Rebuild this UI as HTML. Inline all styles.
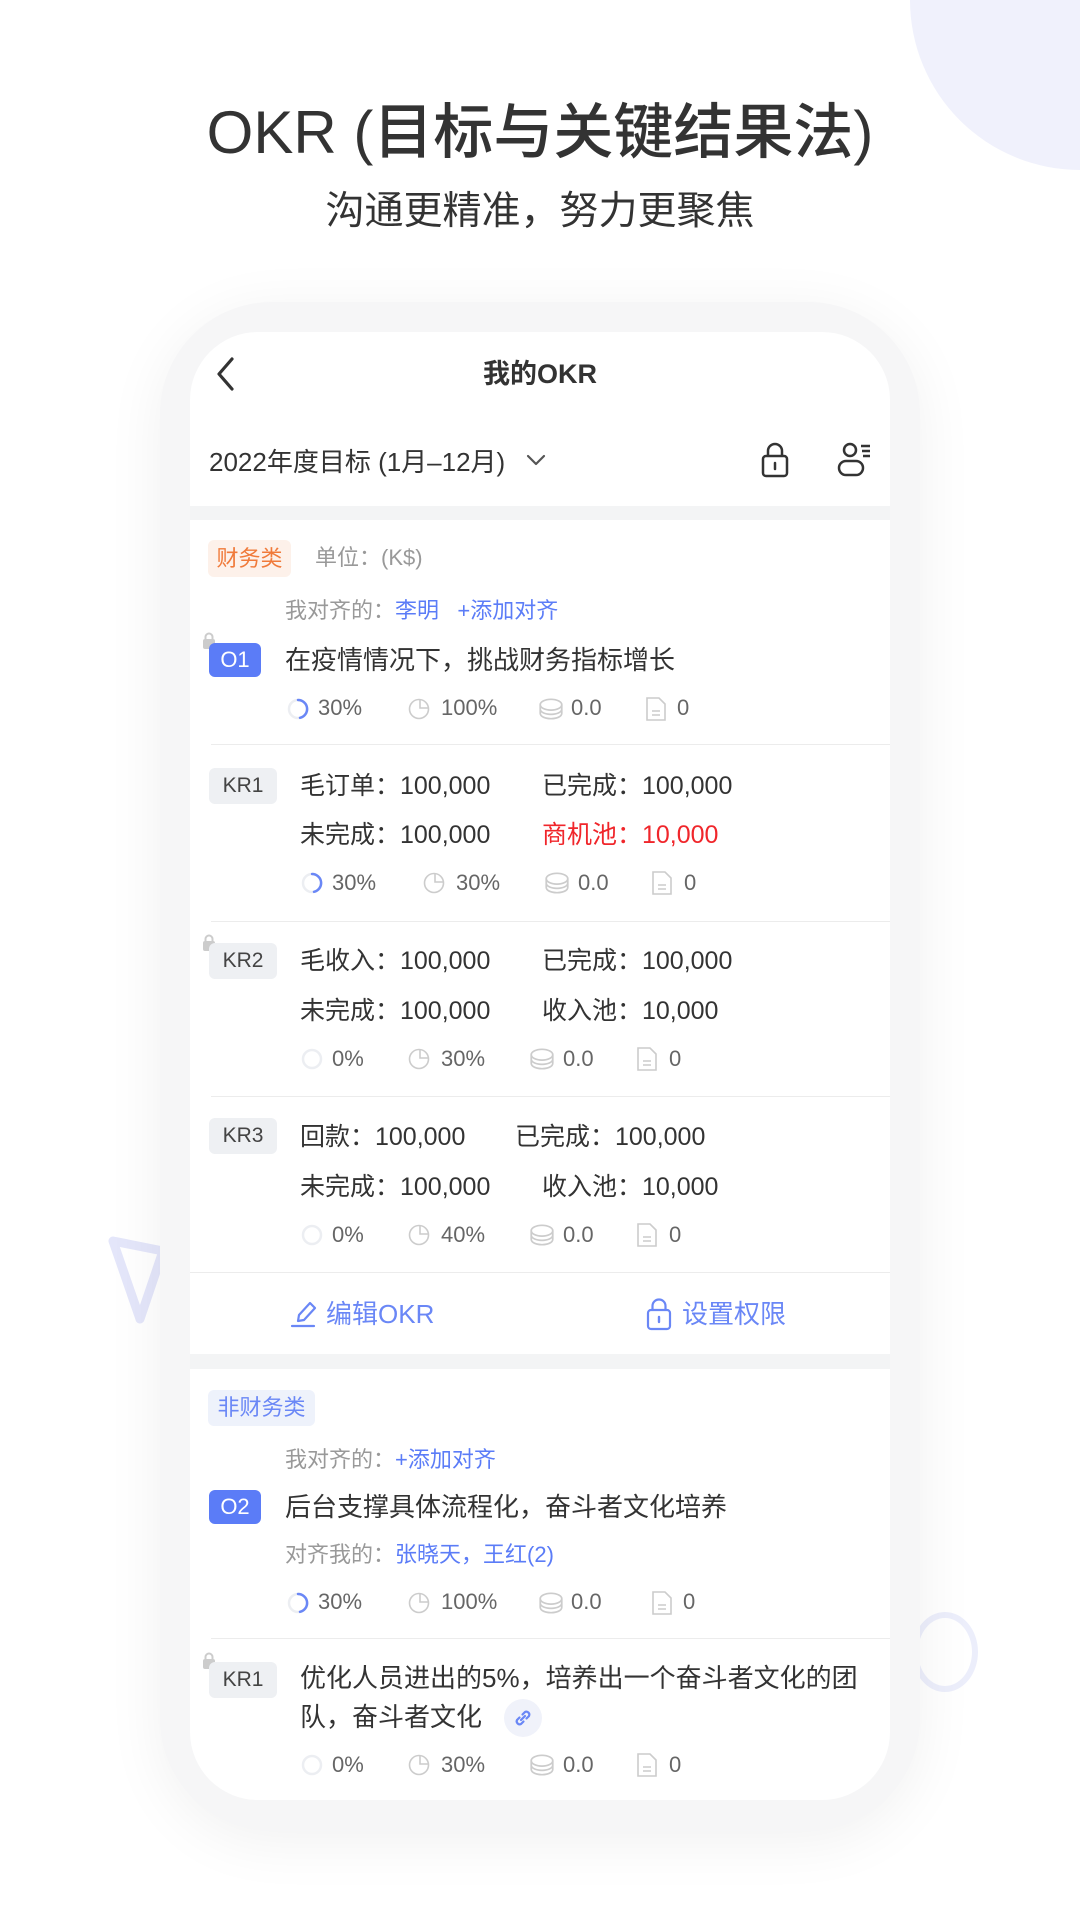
<!DOCTYPE html>
<html><head><meta charset="utf-8"><style>
*{margin:0;padding:0;box-sizing:border-box}
body{width:1080px;height:1920px;position:relative;overflow:hidden;background:#fff;font-family:"Liberation Sans","Noto Sans CJK SC",sans-serif;color:#333}
.a{position:absolute;white-space:nowrap;line-height:40px;height:40px}
.g{color:#999}.b{color:#5b7cf7}
.s{font-size:22px;color:#666}
.m{font-size:25px;color:#333}
svg{position:absolute}
.badge{position:absolute;border-radius:6px;font-size:21px;text-align:center}
.kr{background:#eef0f3;color:#444;width:68px;height:36px;line-height:36px}
.o{background:#5b7cf7;color:#fff;width:52px;height:34px;line-height:34px;font-size:22px}
.div{position:absolute;left:211px;right:190px;height:1px;background:#ececec}
</style></head><body>
<div style="position:absolute;left:910px;top:-170px;width:340px;height:340px;border-radius:50%;background:#f0f1fc"></div>
<div class="a" style="left:0;width:1080px;text-align:center;top:100px;height:66px;line-height:66px;font-size:60px;color:#333;font-weight:500">OKR (目标与关键结果法)</div>
<div class="a" style="left:0;width:1080px;text-align:center;top:190px;height:44px;line-height:44px;font-size:39px;color:#333">沟通更精准，努力更聚焦</div>
<svg style="left:108px;top:1235px" width="62" height="90" viewBox="0 0 62 90"><path d="M5 6 L55 16 L32 84 Z" fill="none" stroke="#e4e6fa" stroke-width="9" stroke-linejoin="round"/></svg>
<div style="position:absolute;left:912px;top:1612px;width:66px;height:80px;border-radius:50%;border:6px solid #eceefb"></div>
<!-- phone -->
<div style="position:absolute;left:160px;top:302px;width:760px;height:1529px;border-radius:112px;background:#f6f6f7;box-shadow:0 10px 60px rgba(0,0,0,0.06)"></div>
<div style="position:absolute;left:190px;top:332px;width:700px;height:1468px;border-radius:68px;background:#f3f4f5;overflow:hidden">
<div style="position:absolute;left:0;top:0;width:700px;height:174px;background:#fff"></div>
<div style="position:absolute;left:0;top:188px;width:700px;height:834px;background:#fff"></div>
<div style="position:absolute;left:0;top:1037px;width:700px;height:440px;background:#fff"></div>
</div>
<!-- header -->
<svg style="left:214px;top:356px" width="24" height="36" viewBox="0 0 24 36"><path d="M18 3 L5 18 L18 33" fill="none" stroke="#333" stroke-width="3.2" stroke-linecap="round" stroke-linejoin="round"/></svg>
<div class="a" style="left:440px;width:200px;text-align:center;top:354px;font-size:27px;font-weight:bold;color:#333">我的OKR</div>
<div class="a" style="left:209px;top:442px;font-size:26px;color:#333">2022年度目标 (1月–12月)</div>
<svg style="left:525px;top:452px" width="22" height="16" viewBox="0 0 22 16"><path d="M3 4 L11 12 L19 4" fill="none" stroke="#555" stroke-width="2.2" stroke-linecap="round" stroke-linejoin="round"/></svg>
<svg style="left:760px;top:441px" width="30" height="38" viewBox="0 0 30 38"><rect x="3" y="15" width="24" height="20" rx="3" fill="none" stroke="#333" stroke-width="2.5"/><path d="M8 15 V10 a7 7 0 0 1 14 0 V15" fill="none" stroke="#333" stroke-width="2.5"/><path d="M15 22 v6" stroke="#333" stroke-width="2.5" stroke-linecap="round"/></svg>
<svg style="left:836px;top:441px" width="38" height="38" viewBox="0 0 38 38"><circle cx="14" cy="9" r="6" fill="none" stroke="#333" stroke-width="2.5"/><rect x="3" y="20" width="24" height="14" rx="7" fill="none" stroke="#333" stroke-width="2.5"/><path d="M25 5h9M26 10h8M27 15h7" stroke="#333" stroke-width="2.5"/></svg>

<!-- card 1 -->
<div class="badge" style="left:208px;top:540px;width:83px;height:37px;line-height:37px;background:#fdf1ea;color:#f07a3a;font-size:22px">财务类</div>
<div class="a s g" style="left:315px;top:538px;color:#999">单位：(K$)</div>
<div class="a s" style="left:285px;top:591px;color:#999">我对齐的：<span class="b">李明</span>&nbsp;&nbsp;&nbsp;<span class="b">+添加对齐</span></div>
<svg style="left:202px;top:632px" width="14" height="18" viewBox="0 0 14 18"><rect x="1" y="7" width="12" height="10" rx="2" fill="#ccc"/><path d="M3.5 7V5a3.5 3.5 0 0 1 7 0v2" fill="none" stroke="#ccc" stroke-width="2"/></svg>
<div class="badge o" style="left:209px;top:643px">O1</div>
<div class="a" style="left:285px;top:640px;font-size:26px;color:#333">在疫情情况下，挑战财务指标增长</div>

<svg style="left:286px;top:697px" width="24" height="24" viewBox="0 0 24 24"><circle cx="12" cy="12" r="9" fill="none" stroke="#eceef2" stroke-width="2.5"/><path d="M12 3A9 9 0 0 1 14 20.8" fill="none" stroke="#6a87f6" stroke-width="2.5" stroke-linecap="round"/></svg>
<div class="a s" style="left:318px;top:688px">30%</div>
<svg style="left:407px;top:697px" width="24" height="24" viewBox="0 0 24 24"><circle cx="12" cy="12" r="9.5" fill="none" stroke="#ccc" stroke-width="1.6"/><path d="M13 2.5V11H21.5" fill="none" stroke="#ccc" stroke-width="1.6"/></svg>
<div class="a s" style="left:441px;top:688px">100%</div>
<svg style="left:537px;top:695px" width="28" height="28" viewBox="0 0 26 24"><ellipse cx="13" cy="8" rx="10" ry="5" fill="none" stroke="#ccc" stroke-width="1.6"/><path d="M3 8v8c0 3 4.5 5 10 5s10-2 10-5V8M3 12c0 3 4.5 5 10 5s10-2 10-5" fill="none" stroke="#ccc" stroke-width="1.6"/></svg>
<div class="a s" style="left:571px;top:688px">0.0</div>
<svg style="left:645px;top:696px" width="22" height="26" viewBox="0 0 22 26"><path d="M2 2h12l6 6v16H2Z" fill="none" stroke="#ccc" stroke-width="1.6"/><path d="M7 15h8M7 19h8" stroke="#ccc" stroke-width="1.6"/></svg>
<div class="a s" style="left:677px;top:688px">0</div>
<div class="div" style="top:744px"></div>

<!-- KR1 -->
<div class="badge kr" style="left:209px;top:768px">KR1</div>
<div class="a m" style="left:300px;top:766px">毛订单：100,000</div>
<div class="a m" style="left:542px;top:766px">已完成：100,000</div>
<div class="a m" style="left:300px;top:815px">未完成：100,000</div>
<div class="a m" style="left:542px;top:815px;color:#f0262b">商机池：10,000</div>
<svg style="left:300px;top:871px" width="24" height="24" viewBox="0 0 24 24"><circle cx="12" cy="12" r="9" fill="none" stroke="#eceef2" stroke-width="2.5"/><path d="M12 3A9 9 0 0 1 14 20.8" fill="none" stroke="#6a87f6" stroke-width="2.5" stroke-linecap="round"/></svg>
<div class="a s" style="left:332px;top:863px">30%</div>
<svg style="left:422px;top:871px" width="24" height="24" viewBox="0 0 24 24"><circle cx="12" cy="12" r="9.5" fill="none" stroke="#ccc" stroke-width="1.6"/><path d="M13 2.5V11H21.5" fill="none" stroke="#ccc" stroke-width="1.6"/></svg>
<div class="a s" style="left:456px;top:863px">30%</div>
<svg style="left:543px;top:869px" width="28" height="28" viewBox="0 0 26 24"><ellipse cx="13" cy="8" rx="10" ry="5" fill="none" stroke="#ccc" stroke-width="1.6"/><path d="M3 8v8c0 3 4.5 5 10 5s10-2 10-5V8M3 12c0 3 4.5 5 10 5s10-2 10-5" fill="none" stroke="#ccc" stroke-width="1.6"/></svg>
<div class="a s" style="left:578px;top:863px">0.0</div>
<svg style="left:651px;top:870px" width="22" height="26" viewBox="0 0 22 26"><path d="M2 2h12l6 6v16H2Z" fill="none" stroke="#ccc" stroke-width="1.6"/><path d="M7 15h8M7 19h8" stroke="#ccc" stroke-width="1.6"/></svg>
<div class="a s" style="left:684px;top:863px">0</div>
<div class="div" style="top:921px"></div>

<!-- KR2 -->
<svg style="left:202px;top:934px" width="14" height="18" viewBox="0 0 14 18"><rect x="1" y="7" width="12" height="10" rx="2" fill="#ccc"/><path d="M3.5 7V5a3.5 3.5 0 0 1 7 0v2" fill="none" stroke="#ccc" stroke-width="2"/></svg>
<div class="badge kr" style="left:209px;top:943px">KR2</div>
<div class="a m" style="left:300px;top:941px">毛收入：100,000</div>
<div class="a m" style="left:542px;top:941px">已完成：100,000</div>
<div class="a m" style="left:300px;top:991px">未完成：100,000</div>
<div class="a m" style="left:542px;top:991px">收入池：10,000</div>
<svg style="left:300px;top:1047px" width="24" height="24" viewBox="0 0 24 24"><circle cx="12" cy="12" r="9" fill="none" stroke="#eceef2" stroke-width="2.5"/></svg>
<div class="a s" style="left:332px;top:1039px">0%</div>
<svg style="left:407px;top:1047px" width="24" height="24" viewBox="0 0 24 24"><circle cx="12" cy="12" r="9.5" fill="none" stroke="#ccc" stroke-width="1.6"/><path d="M13 2.5V11H21.5" fill="none" stroke="#ccc" stroke-width="1.6"/></svg>
<div class="a s" style="left:441px;top:1039px">30%</div>
<svg style="left:528px;top:1045px" width="28" height="28" viewBox="0 0 26 24"><ellipse cx="13" cy="8" rx="10" ry="5" fill="none" stroke="#ccc" stroke-width="1.6"/><path d="M3 8v8c0 3 4.5 5 10 5s10-2 10-5V8M3 12c0 3 4.5 5 10 5s10-2 10-5" fill="none" stroke="#ccc" stroke-width="1.6"/></svg>
<div class="a s" style="left:563px;top:1039px">0.0</div>
<svg style="left:636px;top:1046px" width="22" height="26" viewBox="0 0 22 26"><path d="M2 2h12l6 6v16H2Z" fill="none" stroke="#ccc" stroke-width="1.6"/><path d="M7 15h8M7 19h8" stroke="#ccc" stroke-width="1.6"/></svg>
<div class="a s" style="left:669px;top:1039px">0</div>
<div class="div" style="top:1096px"></div>

<!-- KR3 -->
<div class="badge kr" style="left:209px;top:1118px">KR3</div>
<div class="a m" style="left:300px;top:1117px">回款：100,000</div>
<div class="a m" style="left:515px;top:1117px">已完成：100,000</div>
<div class="a m" style="left:300px;top:1167px">未完成：100,000</div>
<div class="a m" style="left:542px;top:1167px">收入池：10,000</div>
<svg style="left:300px;top:1223px" width="24" height="24" viewBox="0 0 24 24"><circle cx="12" cy="12" r="9" fill="none" stroke="#eceef2" stroke-width="2.5"/></svg>
<div class="a s" style="left:332px;top:1215px">0%</div>
<svg style="left:407px;top:1223px" width="24" height="24" viewBox="0 0 24 24"><circle cx="12" cy="12" r="9.5" fill="none" stroke="#ccc" stroke-width="1.6"/><path d="M13 2.5V11H21.5" fill="none" stroke="#ccc" stroke-width="1.6"/></svg>
<div class="a s" style="left:441px;top:1215px">40%</div>
<svg style="left:528px;top:1221px" width="28" height="28" viewBox="0 0 26 24"><ellipse cx="13" cy="8" rx="10" ry="5" fill="none" stroke="#ccc" stroke-width="1.6"/><path d="M3 8v8c0 3 4.5 5 10 5s10-2 10-5V8M3 12c0 3 4.5 5 10 5s10-2 10-5" fill="none" stroke="#ccc" stroke-width="1.6"/></svg>
<div class="a s" style="left:563px;top:1215px">0.0</div>
<svg style="left:636px;top:1222px" width="22" height="26" viewBox="0 0 22 26"><path d="M2 2h12l6 6v16H2Z" fill="none" stroke="#ccc" stroke-width="1.6"/><path d="M7 15h8M7 19h8" stroke="#ccc" stroke-width="1.6"/></svg>
<div class="a s" style="left:669px;top:1215px">0</div>
<div class="div" style="top:1272px;left:190px"></div>

<!-- actions -->
<svg style="left:290px;top:1299px" width="28" height="30" viewBox="0 0 28 30"><path d="M8 22 L9 16 L20 4 L25 9 L14 21 Z" fill="none" stroke="#6a87f6" stroke-width="2.2" stroke-linejoin="round"/><path d="M2 27h22" stroke="#6a87f6" stroke-width="2.2" stroke-linecap="round"/></svg>
<div class="a b" style="left:326px;top:1294px;font-size:26px;color:#6a87f6">编辑OKR</div>
<svg style="left:646px;top:1297px" width="26" height="34" viewBox="0 0 26 34"><rect x="2" y="13" width="22" height="19" rx="3" fill="none" stroke="#6a87f6" stroke-width="2.2"/><path d="M6.5 13V9a6.5 6.5 0 0 1 13 0v4" fill="none" stroke="#6a87f6" stroke-width="2.2"/><path d="M13 20v5" stroke="#6a87f6" stroke-width="2.4" stroke-linecap="round"/></svg>
<div class="a b" style="left:682px;top:1294px;font-size:26px;color:#6a87f6">设置权限</div>

<!-- card 2 -->
<div class="badge" style="left:208px;top:1390px;width:107px;height:36px;line-height:36px;background:#eef2fb;color:#6a87f6;font-size:22px">非财务类</div>
<div class="a s" style="left:285px;top:1440px;color:#999">我对齐的：<span class="b">+添加对齐</span></div>
<div class="badge o" style="left:209px;top:1490px">O2</div>
<div class="a" style="left:285px;top:1487px;font-size:26px;color:#333">后台支撑具体流程化，奋斗者文化培养</div>
<div class="a s" style="left:285px;top:1535px;color:#999">对齐我的：<span class="b">张晓天，王红(2)</span></div>
<svg style="left:286px;top:1591px" width="24" height="24" viewBox="0 0 24 24"><circle cx="12" cy="12" r="9" fill="none" stroke="#eceef2" stroke-width="2.5"/><path d="M12 3A9 9 0 0 1 14 20.8" fill="none" stroke="#6a87f6" stroke-width="2.5" stroke-linecap="round"/></svg>
<div class="a s" style="left:318px;top:1582px">30%</div>
<svg style="left:407px;top:1591px" width="24" height="24" viewBox="0 0 24 24"><circle cx="12" cy="12" r="9.5" fill="none" stroke="#ccc" stroke-width="1.6"/><path d="M13 2.5V11H21.5" fill="none" stroke="#ccc" stroke-width="1.6"/></svg>
<div class="a s" style="left:441px;top:1582px">100%</div>
<svg style="left:537px;top:1589px" width="28" height="28" viewBox="0 0 26 24"><ellipse cx="13" cy="8" rx="10" ry="5" fill="none" stroke="#ccc" stroke-width="1.6"/><path d="M3 8v8c0 3 4.5 5 10 5s10-2 10-5V8M3 12c0 3 4.5 5 10 5s10-2 10-5" fill="none" stroke="#ccc" stroke-width="1.6"/></svg>
<div class="a s" style="left:571px;top:1582px">0.0</div>
<svg style="left:651px;top:1590px" width="22" height="26" viewBox="0 0 22 26"><path d="M2 2h12l6 6v16H2Z" fill="none" stroke="#ccc" stroke-width="1.6"/><path d="M7 15h8M7 19h8" stroke="#ccc" stroke-width="1.6"/></svg>
<div class="a s" style="left:683px;top:1582px">0</div>
<div class="div" style="top:1638px"></div>

<svg style="left:202px;top:1652px" width="14" height="18" viewBox="0 0 14 18"><rect x="1" y="7" width="12" height="10" rx="2" fill="#ccc"/><path d="M3.5 7V5a3.5 3.5 0 0 1 7 0v2" fill="none" stroke="#ccc" stroke-width="2"/></svg>
<div class="badge kr" style="left:209px;top:1662px">KR1</div>
<div class="a m" style="left:300px;top:1658px;font-size:26px">优化人员进出的5%，培养出一个奋斗者文化的团</div>
<div class="a m" style="left:300px;top:1697px;font-size:26px">队，奋斗者文化</div>
<div style="position:absolute;left:504px;top:1699px;width:38px;height:38px;border-radius:50%;background:#f0f2fa"></div>
<svg style="left:511px;top:1706px" width="24" height="24" viewBox="0 0 24 24"><path d="M10 14l4-4M8.5 11.5l-2.5 2.5a3 3 0 0 0 4 4l2.5-2.5M15.5 12.5l2.5-2.5a3 3 0 0 0-4-4l-2.5 2.5" fill="none" stroke="#6a87f6" stroke-width="2.2" stroke-linecap="round"/></svg>
<svg style="left:300px;top:1753px" width="24" height="24" viewBox="0 0 24 24"><circle cx="12" cy="12" r="9" fill="none" stroke="#eceef2" stroke-width="2.5"/></svg>
<div class="a s" style="left:332px;top:1745px">0%</div>
<svg style="left:407px;top:1753px" width="24" height="24" viewBox="0 0 24 24"><circle cx="12" cy="12" r="9.5" fill="none" stroke="#ccc" stroke-width="1.6"/><path d="M13 2.5V11H21.5" fill="none" stroke="#ccc" stroke-width="1.6"/></svg>
<div class="a s" style="left:441px;top:1745px">30%</div>
<svg style="left:528px;top:1751px" width="28" height="28" viewBox="0 0 26 24"><ellipse cx="13" cy="8" rx="10" ry="5" fill="none" stroke="#ccc" stroke-width="1.6"/><path d="M3 8v8c0 3 4.5 5 10 5s10-2 10-5V8M3 12c0 3 4.5 5 10 5s10-2 10-5" fill="none" stroke="#ccc" stroke-width="1.6"/></svg>
<div class="a s" style="left:563px;top:1745px">0.0</div>
<svg style="left:636px;top:1752px" width="22" height="26" viewBox="0 0 22 26"><path d="M2 2h12l6 6v16H2Z" fill="none" stroke="#ccc" stroke-width="1.6"/><path d="M7 15h8M7 19h8" stroke="#ccc" stroke-width="1.6"/></svg>
<div class="a s" style="left:669px;top:1745px">0</div>
</body></html>
